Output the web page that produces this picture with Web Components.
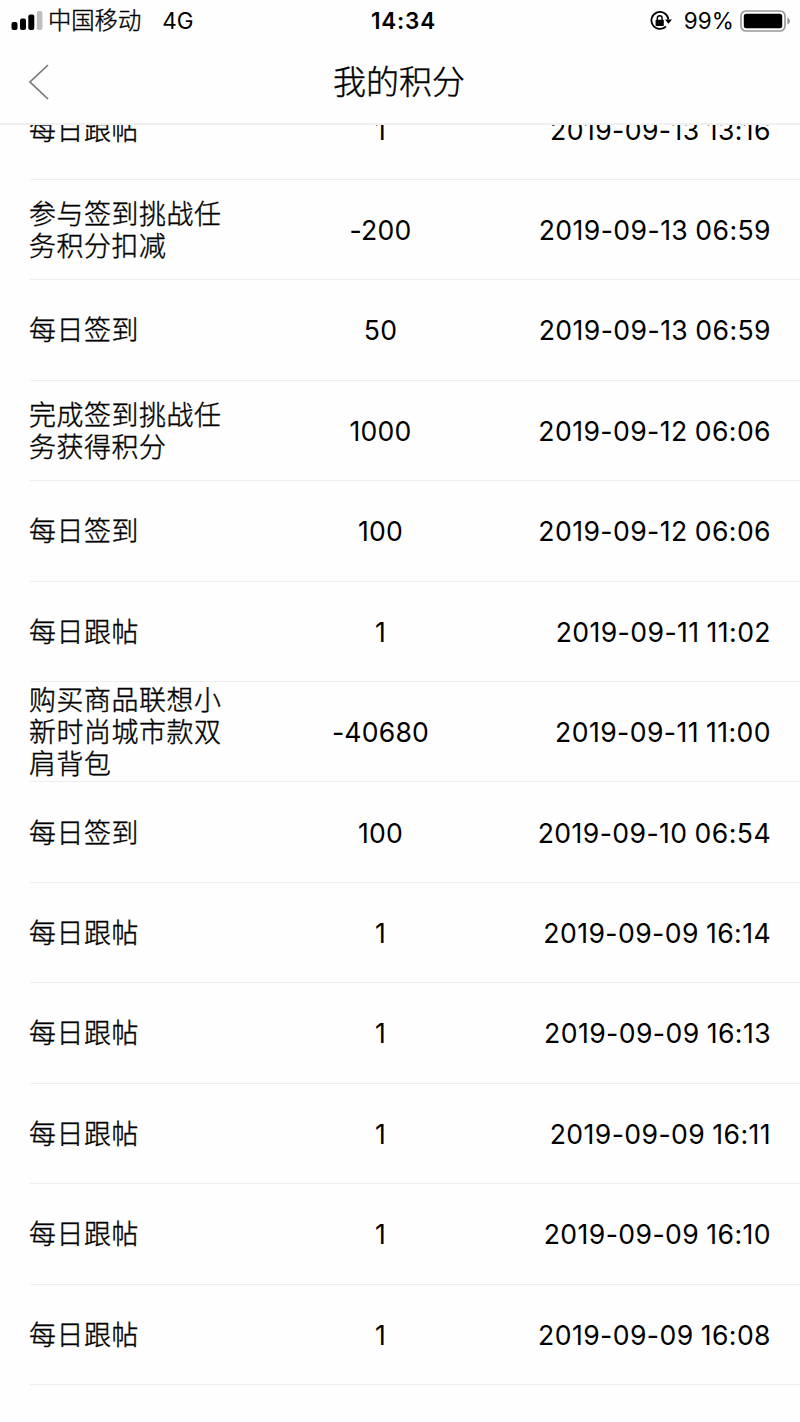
<!DOCTYPE html>
<html lang="zh-CN">
<head>
<meta charset="utf-8">
<title>我的积分</title>
<style>
  body {
    margin: 0;
    height: 1422px;
    display: flex;
    flex-direction: column;
    overflow: hidden;
    background: #fefefe;
    color: #000;
    font-family: Inter, "Noto Sans CJK SC", sans-serif;
  }
</style>
</head>
<body>
<status-bar carrier="中国移动" network="4G" time="14:34" battery="99%"></status-bar>
<nav-header>我的积分</nav-header>
<point-list></point-list>

<script>
class StatusBar extends HTMLElement {
  constructor() {
    super();
    this.attachShadow({ mode: 'open' });
  }

  connectedCallback() {
    this.shadowRoot.innerHTML = `
      <style>
        :host {
          display: grid;
          grid-template-columns: 1fr auto 1fr;
          align-items: center;
          box-sizing: border-box;
          height: 40px;
          padding: 0 9px 0 11px;
          flex: none;
          font-size: 22.5px;
          line-height: 40px;
        }
        svg { display: block; flex: none; }
        .left, .right { display: flex; align-items: center; }
        .right { justify-content: flex-end; }
        .carrier {
          margin-left: 5px;
          font-size: 23.3px;
          font-weight: 300;
          -webkit-text-stroke: 0.4px #000;
        }
        .network { margin-left: 21px; padding-top: 1px; }
        .time { font-weight: 600; letter-spacing: 0.8px; padding: 1px 0 0 5px; }
        .battery { margin: 0 6px 0 12px; padding-top: 1px; letter-spacing: 0.1px; }
      </style>
      <div class="left">
        <svg width="32" height="20" viewBox="0 0 32 20">
          <rect x="0.5" y="11" width="6" height="8" rx="2"/>
          <rect x="9" y="7.5" width="6" height="11.5" rx="2"/>
          <rect x="17.3" y="3.5" width="6" height="15.5" rx="2"/>
          <rect x="25.8" y="0" width="5.6" height="19" rx="2" fill="#bebebe"/>
        </svg>
        <span class="carrier">${this.getAttribute('carrier')}</span>
        <span class="network">${this.getAttribute('network')}</span>
      </div>
      <div class="time">${this.getAttribute('time')}</div>
      <div class="right">
        <svg width="22" height="20" viewBox="0 0 22 20">
          <path d="M15.9 15.5A8.5 8.5 0 1 1 18.4 8.5" fill="none" stroke="#000" stroke-width="1.8"/>
          <path d="M15 8.4h7l-3.5 4.4z"/>
          <rect x="5.6" y="8.7" width="8.2" height="6.3" rx="0.8"/>
          <path d="M7.3 9V7.2a2.4 2.4 0 0 1 4.8 0V9" fill="none" stroke="#000" stroke-width="1.4"/>
        </svg>
        <span class="battery">${this.getAttribute('battery')}</span>
        <svg width="51" height="22" viewBox="0 0 51 22">
          <rect x="1" y="1" width="44" height="20" rx="5" fill="none" stroke="#999" stroke-width="1.7"/>
          <rect x="3.8" y="3.8" width="38.4" height="14.4" rx="2.5"/>
          <path d="M47.3 7.5c3.6 1.1 3.6 5.9 0 7z" fill="#999"/>
        </svg>
      </div>
    `;
  }
}

class NavHeader extends HTMLElement {
  constructor() {
    super();
    this.attachShadow({ mode: 'open' }).innerHTML = `
      <style>
        :host {
          display: grid;
          grid-template-columns: 60px 1fr 60px;
          align-items: center;
          box-sizing: border-box;
          height: 85px;
          flex: none;
          border-bottom: 2px solid #f0f0f0;
        }
        svg { display: block; margin-left: 28px; }
        h1 {
          margin: 0 2px 0 0;
          text-align: center;
          font-size: 33px;
          font-weight: 300;
          line-height: 48px;
          -webkit-text-stroke: 0.4px #000;
        }
      </style>
      <svg width="22" height="36" viewBox="0 0 22 36">
        <path d="M20 1L2 18l18 17" fill="none" stroke="#777" stroke-width="1.7"/>
      </svg>
      <h1><slot></slot></h1>
    `;
  }
}

class PointItem extends HTMLElement {
  constructor() {
    super();
    this.attachShadow({ mode: 'open' });
  }

  set record(record) {
    this._record = record;
    this.render();
  }

  render() {
    const [title, points, date] = this._record;
    this.shadowRoot.innerHTML = `
      <style>
        :host {
          display: grid;
          grid-template-columns: 200px 1fr 250px;
          align-items: center;
          box-sizing: border-box;
          height: 100.45px;
          margin-left: 30px;
          padding: 1px 29px 0 0;
          border-bottom: 1px solid #eee;
          font-size: 26.6px;
          line-height: 32.2px;
        }
        .title {
          margin-left: -1px;
          font-size: 26.9px;
          font-weight: 300;
          letter-spacing: 0.6px;
          -webkit-text-stroke: 0.4px #000;
        }
        .points { text-align: center; letter-spacing: 0.2px; padding-left: 10px; }
        .date {
          text-align: right;
          white-space: nowrap;
          letter-spacing: 0.42px;
          word-spacing: -0.8px;
          font-kerning: none;
        }
      </style>
      <div class="title">${title}</div>
      <div class="points">${points}</div>
      <div class="date">${date}</div>
    `;
  }
}

class PointList extends HTMLElement {
  constructor() {
    super();
    this.attachShadow({ mode: 'open' }).innerHTML = `
      <style>
        :host { display: block; flex: 1; min-height: 0; overflow: hidden; }
        /* the list is scrolled a little under the header */
        .records { margin-top: -45.6px; }
      </style>
      <div class="records"></div>
    `;
  }

  set records(records) {
    const box = this.shadowRoot.querySelector('.records');
    records.forEach((record) => {
      const item = document.createElement('point-item');
      item.record = record;
      box.appendChild(item);
    });
  }
}

customElements.define('status-bar', StatusBar);
customElements.define('nav-header', NavHeader);
customElements.define('point-item', PointItem);
customElements.define('point-list', PointList);

document.querySelector('point-list').records = [
  ['每日跟帖', '1', '2019-09-13 13:16'],
  ['参与签到挑战任务积分扣减', '-200', '2019-09-13 06:59'],
  ['每日签到', '50', '2019-09-13 06:59'],
  ['完成签到挑战任务获得积分', '1000', '2019-09-12 06:06'],
  ['每日签到', '100', '2019-09-12 06:06'],
  ['每日跟帖', '1', '2019-09-11 11:02'],
  ['购买商品联想小新时尚城市款双肩背包', '-40680', '2019-09-11 11:00'],
  ['每日签到', '100', '2019-09-10 06:54'],
  ['每日跟帖', '1', '2019-09-09 16:14'],
  ['每日跟帖', '1', '2019-09-09 16:13'],
  ['每日跟帖', '1', '2019-09-09 16:11'],
  ['每日跟帖', '1', '2019-09-09 16:10'],
  ['每日跟帖', '1', '2019-09-09 16:08'],
];
</script>
</body>
</html>
